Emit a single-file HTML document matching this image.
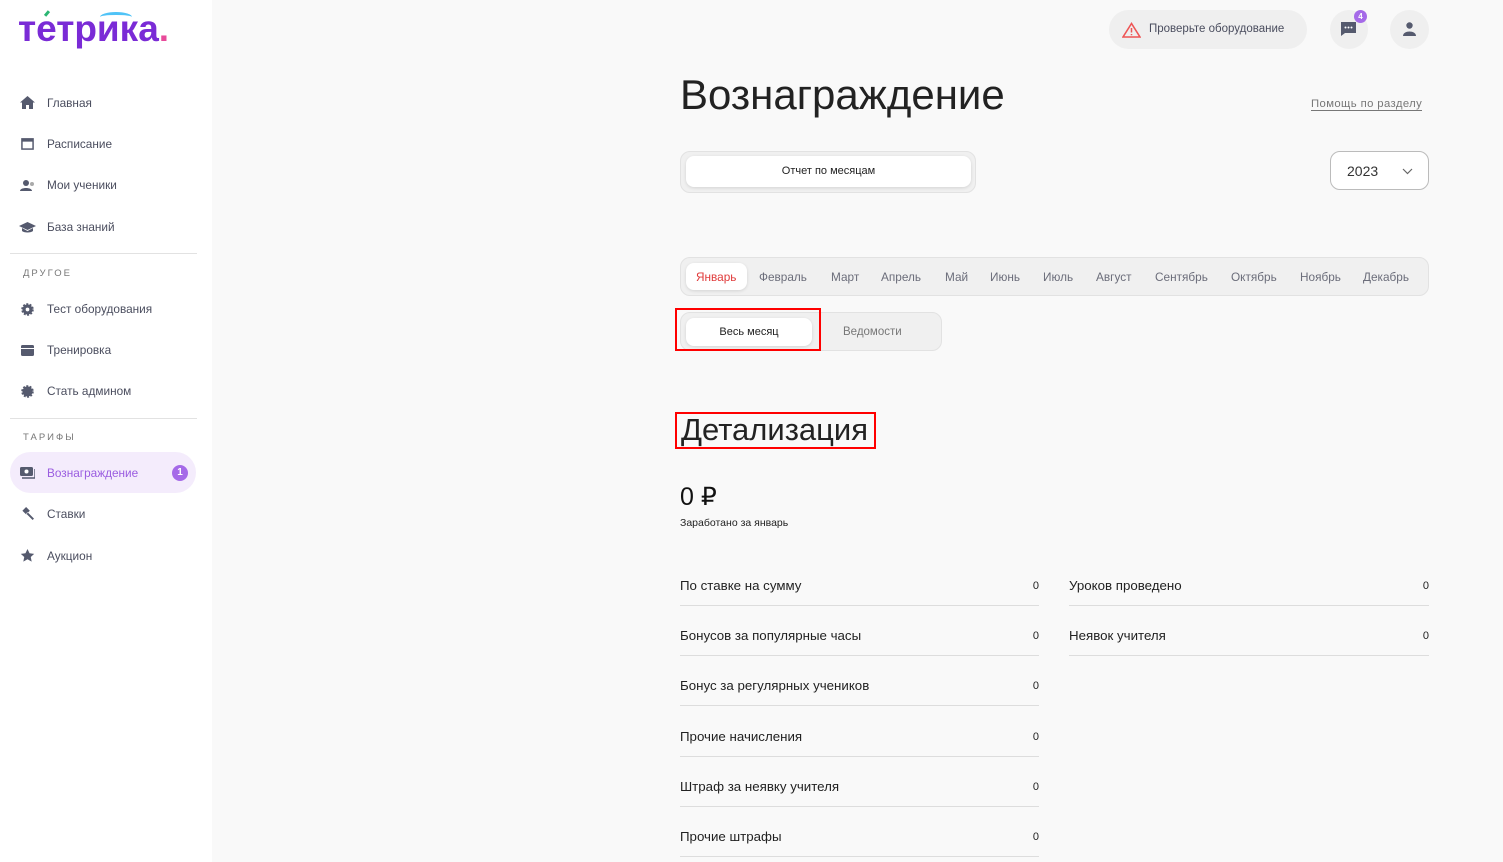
<!DOCTYPE html><html><head><meta charset="utf-8"><style>
*{margin:0;padding:0;box-sizing:border-box}
html,body{width:1503px;height:862px;overflow:hidden}
body{background:#f9f9f9;font-family:"Liberation Sans",sans-serif;position:relative;color:#222}
.a{position:absolute;white-space:nowrap}
.side{position:absolute;left:0;top:0;width:212px;height:862px;background:#fff}
.nav{font-size:11.8px;color:#4a4d5e;left:47px}
.ic{position:absolute;left:20px;width:15px;height:13px}
.hr{position:absolute;left:10px;width:187px;height:1px;background:#e2e2e2}
.sec{font-size:9.5px;letter-spacing:2px;color:#777;left:23px}
.m{font-size:11.8px;color:#6b6d7a;top:270px}
.row{position:absolute;width:359px;height:50px;border-bottom:1px solid #ddd;font-size:13.3px;color:#222}
.row span{position:absolute;top:22px}
.row b{position:absolute;right:0;top:24px;font-weight:normal;font-size:11px}
</style></head><body>
<div class="side">
<div class="a" style="left:18px;top:8px;font-size:37px;font-weight:bold;color:#7a2bd6;letter-spacing:0px">тетрика<span style="color:#e84a9a">.</span></div>
<div class="a" style="left:44px;top:12px;width:6px;height:3px;background:#2bb673;transform:rotate(-50deg)"></div>
<div class="a" style="left:100px;top:12px;width:32px;height:10px;border-top:3px solid #4fc3f7;border-radius:50% 50% 0 0"></div>
<svg class="ic" style="top:96px" viewBox="0 0 15 13"><path d="M7.5 0L0 6.5h2V13h4V9h3v4h4V6.5h2z" fill="#555a6e"/></svg>
<div class="a nav" style="top:96px">Главная</div>
<svg class="ic" style="top:137px" viewBox="0 0 15 14"><rect x="1.5" y="2" width="12" height="11" fill="none" stroke="#555a6e" stroke-width="1.6"/><rect x="1.5" y="2" width="12" height="3" fill="#555a6e"/></svg>
<div class="a nav" style="top:137px">Расписание</div>
<svg class="ic" style="top:179px" viewBox="0 0 15 13"><circle cx="6" cy="4" r="3" fill="#555a6e"/><path d="M0 12c0-4 12-4 12 0z" fill="#555a6e"/><circle cx="12" cy="5" r="2" fill="#aaa"/></svg>
<div class="a nav" style="top:178px">Мои ученики</div>
<svg class="ic" style="top:221px;width:17px;left:19px" viewBox="0 0 17 13"><path d="M8.5 1L0 5l8.5 4L17 5z M3 7v3c2 2 9 2 11 0V7l-5.5 3z" fill="#555a6e"/></svg>
<div class="a nav" style="top:220px">База знаний</div>
<div class="hr" style="top:253px"></div>
<div class="a sec" style="top:268px">ДРУГОЕ</div>
<svg class="ic" style="top:303px" viewBox="0 0 15 14"><circle cx="7.5" cy="7" r="5.5" fill="#555a6e" stroke="#555a6e" stroke-width="2.5" stroke-dasharray="2 1.5"/><circle cx="7.5" cy="7" r="2" fill="#fff"/></svg>
<div class="a nav" style="top:302px">Тест оборудования</div>
<svg class="ic" style="top:344px" viewBox="0 0 15 13"><rect x="1" y="1" width="13" height="11" rx="1.5" fill="#555a6e"/><rect x="1" y="4" width="13" height="1" fill="#fff"/></svg>
<div class="a nav" style="top:343px">Тренировка</div>
<svg class="ic" style="top:385px" viewBox="0 0 15 14"><circle cx="7.5" cy="7" r="5.5" fill="#555a6e" stroke="#555a6e" stroke-width="2.5" stroke-dasharray="2 1.5"/></svg>
<div class="a nav" style="top:384px">Стать админом</div>
<div class="hr" style="top:418px"></div>
<div class="a sec" style="top:432px">ТАРИФЫ</div>
<div class="a" style="left:10px;top:452px;width:186px;height:41px;border-radius:21px;background:#f4ecfc"></div>
<svg class="ic" style="top:466px" viewBox="0 0 15 13"><rect x="0" y="1" width="13" height="9" rx="1.5" fill="#555a6e"/><circle cx="6.5" cy="5.5" r="2" fill="#fff"/><path d="M2 12h13V3" stroke="#555a6e" stroke-width="1.4" fill="none"/></svg>
<div class="a nav" style="top:466px;color:#9a5ce0">Вознаграждение</div>
<div class="a" style="left:172px;top:465px;width:16px;height:16px;border-radius:50%;background:#a56ae8;color:#fff;font-size:10px;font-weight:bold;text-align:center;line-height:16px">1</div>
<svg class="ic" style="top:507px" viewBox="0 0 15 14"><path d="M2 4l4-4 4 4-4 4z M6 7l7 7 1.5-1.5-7-7z" fill="#555a6e"/></svg>
<div class="a nav" style="top:507px">Ставки</div>
<svg class="ic" style="top:549px" viewBox="0 0 15 14"><path d="M7.5 0l2.2 4.6 5 .6-3.7 3.4 1 5-4.5-2.5-4.5 2.5 1-5L.3 5.2l5-.6z" fill="#555a6e"/></svg>
<div class="a nav" style="top:549px">Аукцион</div>
</div>

<div class="a" style="left:1109px;top:10px;width:198px;height:39px;border-radius:20px;background:#efefef"></div>
<svg class="a" style="left:1122px;top:22px" width="19" height="16" viewBox="0 0 19 16"><path d="M9.5 1.5L1 15h17z" fill="none" stroke="#e55" stroke-width="1.6"/><path d="M9.5 6v4.5M9.5 12v1.3" stroke="#e55" stroke-width="1.5"/></svg>
<div class="a" style="left:1149px;top:23px;font-size:11.5px;color:#4a4d5e">Проверьте оборудование</div>
<div class="a" style="left:1330px;top:10px;width:38px;height:39px;border-radius:50%;background:#efefef"></div>
<svg class="a" style="left:1340px;top:21px" width="17" height="16" viewBox="0 0 17 16"><path d="M1 1h15v11H5l-4 3z" fill="#555a6e"/><circle cx="5.5" cy="6.5" r="1" fill="#fff"/><circle cx="8.5" cy="6.5" r="1" fill="#fff"/><circle cx="11.5" cy="6.5" r="1" fill="#fff"/></svg>
<div class="a" style="left:1354px;top:10px;width:13px;height:13px;border-radius:50%;background:#a56ae8;color:#fff;font-size:8px;font-weight:bold;text-align:center;line-height:13px">4</div>
<div class="a" style="left:1390px;top:10px;width:39px;height:39px;border-radius:50%;background:#efefef"></div>
<svg class="a" style="left:1403px;top:22px" width="13" height="14" viewBox="0 0 13 14"><circle cx="6.5" cy="3.5" r="3.2" fill="#555a6e"/><path d="M0 14c0-6 13-6 13 0z" fill="#555a6e"/></svg>

<div class="a" style="left:680px;top:71px;font-size:42px;color:#222">Вознаграждение</div>
<div class="a" style="left:1311px;top:98px;font-size:11.3px;color:#777;border-bottom:1px solid #777;letter-spacing:.4px">Помощь по разделу</div>

<div class="a" style="left:680px;top:151px;width:296px;height:42px;border-radius:10px;background:#f0f0f0;border:1px solid #e2e2e2"></div>
<div class="a" style="left:686px;top:156px;width:285px;height:31px;border-radius:8px;background:#fff;box-shadow:0 1px 3px rgba(0,0,0,.12);font-size:11px;text-align:center;line-height:31px;color:#222">Отчет по месяцам</div>
<div class="a" style="left:1330px;top:151px;width:99px;height:39px;border-radius:10px;background:#fff;border:1px solid #bbb"></div>
<div class="a" style="left:1347px;top:163px;font-size:14px;color:#333">2023</div>
<svg class="a" style="left:1402px;top:168px" width="11" height="7" viewBox="0 0 11 7"><path d="M1 1l4.5 4.5L10 1" fill="none" stroke="#666" stroke-width="1.2"/></svg>

<div class="a" style="left:680px;top:257px;width:749px;height:39px;border-radius:10px;background:#f0f0f0;border:1px solid #e2e2e2"></div>
<div class="a" style="left:686px;top:263px;width:61px;height:27px;border-radius:8px;background:#fff;box-shadow:0 1px 3px rgba(0,0,0,.12)"></div>
<div class="a m" style="left:696px;color:#e03a3a">Январь</div>
<div class="a m" style="left:759px">Февраль</div>
<div class="a m" style="left:831px">Март</div>
<div class="a m" style="left:881px">Апрель</div>
<div class="a m" style="left:945px">Май</div>
<div class="a m" style="left:990px">Июнь</div>
<div class="a m" style="left:1043px">Июль</div>
<div class="a m" style="left:1096px">Август</div>
<div class="a m" style="left:1155px">Сентябрь</div>
<div class="a m" style="left:1231px">Октябрь</div>
<div class="a m" style="left:1300px">Ноябрь</div>
<div class="a m" style="left:1363px">Декабрь</div>

<div class="a" style="left:680px;top:312px;width:262px;height:39px;border-radius:10px;background:#f0f0f0;border:1px solid #e2e2e2"></div>
<div class="a" style="left:686px;top:318px;width:126px;height:28px;border-radius:8px;background:#fff;box-shadow:0 1px 3px rgba(0,0,0,.12);font-size:11px;text-align:center;line-height:28px;color:#222">Весь месяц</div>
<div class="a" style="left:843px;top:326px;font-size:11.5px;color:#777">Ведомости</div>
<div class="a" style="left:675px;top:308px;width:146px;height:43px;border:2px solid #f00"></div>

<div class="a" style="left:681px;top:412px;font-size:31px;color:#222">Детализация</div>
<div class="a" style="left:675px;top:412px;width:201px;height:37px;border:2px solid #f00"></div>

<div class="a" style="left:680px;top:482px;font-size:25px;color:#111">0 ₽</div>
<div class="a" style="left:680px;top:517px;font-size:10.5px;color:#222">Заработано за январь</div>

<div class="row" style="left:680px;top:556px"><span>По ставке на сумму</span><b>0</b></div>
<div class="row" style="left:680px;top:606px"><span>Бонусов за популярные часы</span><b>0</b></div>
<div class="row" style="left:680px;top:656px"><span>Бонус за регулярных учеников</span><b>0</b></div>
<div class="row" style="left:680px;top:707px"><span>Прочие начисления</span><b>0</b></div>
<div class="row" style="left:680px;top:757px"><span>Штраф за неявку учителя</span><b>0</b></div>
<div class="row" style="left:680px;top:807px"><span>Прочие штрафы</span><b>0</b></div>
<div class="row" style="left:1069px;top:556px;width:360px"><span>Уроков проведено</span><b>0</b></div>
<div class="row" style="left:1069px;top:606px;width:360px"><span>Неявок учителя</span><b>0</b></div>
</body></html>
